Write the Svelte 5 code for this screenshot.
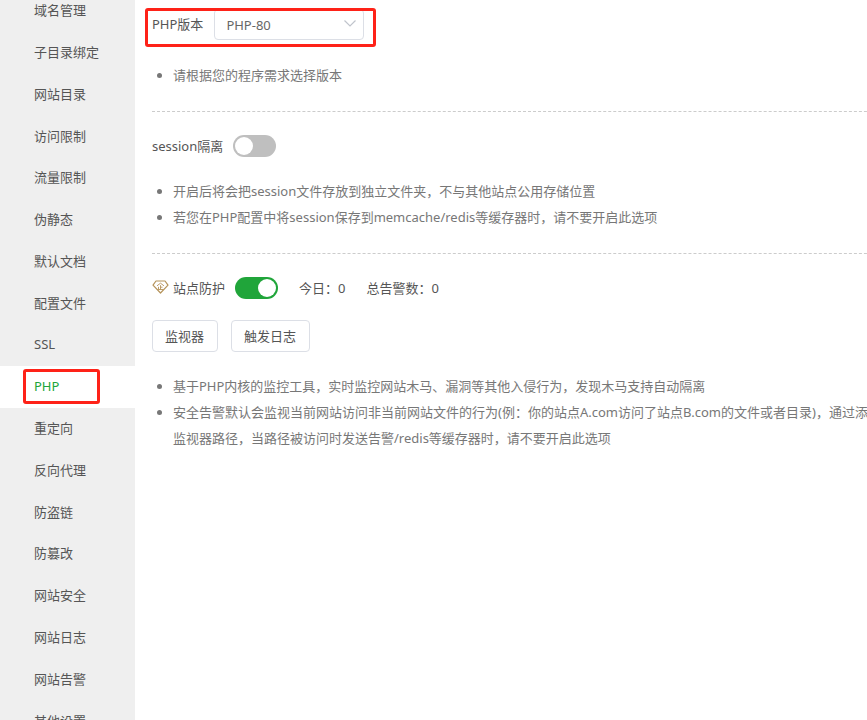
<script lang="ts">
  const menu = [
    '域名管理',
    '子目录绑定',
    '网站目录',
    '访问限制',
    '流量限制',
    '伪静态',
    '默认文档',
    '配置文件',
    'SSL',
    'PHP',
    '重定向',
    '反向代理',
    '防盗链',
    '防篡改',
    '网站安全',
    '网站日志',
    '网站告警',
    '其他设置',
  ];
  const versions = ['PHP-80', 'PHP-74', 'PHP-56'];

  let active = $state('PHP');
  let version = $state('PHP-80');
  let sessionIsolated = $state(false);
  let siteGuard = $state(true);
  let today = $state(0);
  let total = $state(0);
</script>

<div class="panel">
  <nav class="sidebar">
    <ul class="menu">
      {#each menu as item}
        <li class:active={item === active}>
          <a href="#{item}" onclick={() => (active = item)}>{item}</a>
          {#if item === 'PHP'}
            <span class="mark mark-menu"></span>
          {/if}
        </li>
      {/each}
    </ul>
  </nav>

  <main class="content">
    <section>
      <div class="row version-row">
        <label for="version">PHP版本</label>
        <div class="select">
          <select id="version" bind:value={version}>
            {#each versions as v}
              <option value={v}>{v}</option>
            {/each}
          </select>
          <svg class="arrow" viewBox="0 0 14 14" width="14" height="14">
            <path d="M1.5 4.5 L7 10 L12.5 4.5" fill="none" stroke="#c0c4cc" stroke-width="1.2" />
          </svg>
        </div>
        <span class="mark mark-version"></span>
      </div>
      <ul class="tips">
        <li>请根据您的程序需求选择版本</li>
      </ul>
    </section>

    <section>
      <div class="row">
        <label for="session">session隔离</label>
        <input id="session" class="switch" type="checkbox" role="switch" bind:checked={sessionIsolated} />
      </div>
      <ul class="tips">
        <li>开启后将会把session文件存放到独立文件夹，不与其他站点公用存储位置</li>
        <li>若您在PHP配置中将session保存到memcache/redis等缓存器时，请不要开启此选项</li>
      </ul>
    </section>

    <section>
      <div class="row">
        <label class="guard" for="guard">
          <svg viewBox="0 0 17 14" width="17" height="14" fill="none" stroke="#b5935a">
            <path d="M4 1 H13 L16 5.2 L8.5 13 L1 5.2 Z" stroke-width="1.2" stroke-linejoin="round" />
            <path d="M5 5.8 L8.5 3.2 L12 5.8 M8.5 5.2 V9.3 M8.5 7.2 H10.5 M6.5 6.8 V9.3 M5.8 9.5 H11.2" stroke-width="0.9" />
          </svg>
          站点防护
        </label>
        <input id="guard" class="switch" type="checkbox" role="switch" bind:checked={siteGuard} />
        <div class="stats">
          <span>今日：{today}</span>
          <span>总告警数：{total}</span>
        </div>
      </div>
      <div class="buttons">
        <button type="button">监视器</button>
        <button type="button">触发日志</button>
      </div>
      <ul class="tips">
        <li>基于PHP内核的监控工具，实时监控网站木马、漏洞等其他入侵行为，发现木马支持自动隔离</li>
        <li>安全告警默认会监视当前网站访问非当前网站文件的行为(例：你的站点A.com访问了站点B.com的文件或者目录)，通过添加监视器路径，当路径被访问时发送告警/redis等缓存器时，请不要开启此选项</li>
      </ul>
    </section>
  </main>
</div>

<style>
  :global(body) {
    margin: 0;
    background: #fff;
  }
  .panel {
    display: flex;
    height: 100vh;
    overflow: hidden;
    font-family: 'Noto Sans', 'Noto Sans CJK SC', sans-serif;
    font-size: 13px;
    color: #555;
  }
  ul {
    margin: 0;
    padding: 0;
    list-style: none;
  }

  /* left menu */
  .sidebar {
    flex: 0 0 135px;
    overflow: hidden;
    background: #efefef;
  }
  .menu {
    display: grid;
    grid-auto-rows: 1fr;
    height: 752px;
    margin-top: -10px;
  }
  .menu li {
    position: relative;
    display: flex;
  }
  .menu a {
    flex: 1;
    display: flex;
    align-items: center;
    padding: 0 0 2px 34px;
    color: #555;
    text-decoration: none;
  }
  .menu .active {
    background: #fff;
  }
  .menu .active a {
    color: #20a53a;
  }

  /* red highlight frames */
  .mark {
    position: absolute;
    box-sizing: border-box;
    border: 3px solid #fe2218;
    border-radius: 3px;
    pointer-events: none;
  }
  .mark-menu {
    inset: 3px 35px 4px 23px;
  }
  .mark-version {
    top: -1px;
    bottom: -7px;
    left: -7px;
    width: 231px;
  }

  /* right side */
  .content {
    flex: 1 0 752px;
    box-sizing: border-box;
    padding: 9px 0 0 17px;
  }
  section {
    padding-bottom: 23px;
    margin-bottom: 23px;
    border-bottom: 1px dashed #ccc;
  }
  section:last-child {
    border-bottom: 0;
  }
  .row {
    position: relative;
    display: flex;
    align-items: center;
    gap: 10px;
    height: 22px;
  }
  .row label,
  .stats {
    padding-bottom: 2px;
  }
  .version-row {
    gap: 11px;
    height: 31px;
    margin-bottom: 22px;
  }
  .select {
    position: relative;
    width: 150px;
    height: 31px;
  }
  select {
    appearance: none;
    box-sizing: border-box;
    width: 100%;
    height: 100%;
    padding: 0 30px 0 11px;
    border: 1px solid #dcdfe6;
    border-radius: 4px;
    background: #fff;
    font: inherit;
    color: #666;
  }
  .arrow {
    position: absolute;
    top: 7px;
    right: 7px;
    pointer-events: none;
  }
  .switch {
    appearance: none;
    display: flex;
    box-sizing: border-box;
    width: 43px;
    height: 22px;
    margin: 0;
    padding: 2px;
    border-radius: 11px;
    background: #bfbfbf;
    cursor: pointer;
  }
  .switch::before {
    content: '';
    width: 18px;
    height: 18px;
    border-radius: 50%;
    background: #fff;
  }
  .switch:checked {
    justify-content: flex-end;
    background: #20a53a;
  }
  .guard {
    display: flex;
    align-items: center;
    gap: 4px;
  }
  .stats {
    display: flex;
    gap: 21px;
    margin-left: 11px;
  }
  .buttons {
    display: flex;
    gap: 13px;
    margin-top: 21px;
  }
  button {
    height: 32px;
    padding: 0 13px 2px 12px;
    border: 1px solid #dcdfe6;
    border-radius: 4px;
    background: #fff;
    font: inherit;
    color: #555;
    cursor: pointer;
  }
  .tips {
    margin-top: 21px;
    line-height: 26px;
    color: #777;
  }
  .tips li {
    position: relative;
    padding-left: 21px;
  }
  .tips li::before {
    content: '';
    position: absolute;
    top: 11px;
    left: 5px;
    width: 5px;
    height: 5px;
    border-radius: 50%;
    background: #777;
  }
</style>
